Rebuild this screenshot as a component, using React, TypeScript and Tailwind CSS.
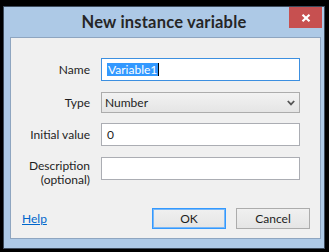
export default function App() {
  const font = { fontFamily: 'Lato, "Liberation Sans", sans-serif' }
  return (
    <div className="w-[329px] h-[252px] bg-black pt-[6px] pl-[3px] overflow-hidden" style={font}>
      <div className="relative w-[322px] h-[243px] border border-[#3d4b5c] bg-[#adc9e6] flex flex-col">
        {/* title bar */}
        <div className="h-[30px] flex items-center justify-center">
          <span className="text-[16.5px] font-bold text-[#262626] tracking-[0.2px] pt-[1px]">New instance variable</span>
        </div>
        <button className="absolute top-0 right-[2px] w-[33px] h-[21px] bg-[#c75050] flex items-center justify-center">
          <svg width="10" height="8" viewBox="0 0 10 8">
            <path d="M1.5 0.8 L8.5 7.2 M8.5 0.8 L1.5 7.2" stroke="white" strokeWidth="2.2" />
          </svg>
        </button>

        {/* client area */}
        <div className="ml-[6px] mr-[3px] h-[202px] border border-[#8ea5c0] bg-[#f0f0f0] flex flex-col text-[12px] text-[#1e1e1e]">
          <div className="mt-[20px] flex items-center h-[23px]">
            <label className="w-[79px] text-right">Name</label>
            <div className="ml-[11px] w-[199px] h-[23px] border border-[#3c8fe0] bg-white flex items-center pl-[5px]">
              <span className="bg-[#3399ff] text-white leading-[13px] px-[1px]">Variable1</span>
              <span className="w-[1px] h-[13px] bg-black" />
            </div>
          </div>

          <div className="mt-[11px] flex items-center h-[21px]">
            <label className="w-[79px] text-right">Type</label>
            <div className="ml-[11px] w-[199px] h-[21px] border border-[#acacac] bg-gradient-to-b from-[#f2f2f2] to-[#e5e5e5] flex items-center pl-[3px] pr-[4px] justify-between">
              <span>Number</span>
              <svg width="8" height="6" viewBox="0 0 8 6">
                <path d="M0.8 1 L4 4.4 L7.2 1" stroke="#555" strokeWidth="1.8" fill="none" />
              </svg>
            </div>
          </div>

          <div className="mt-[10px] flex items-center h-[23px]">
            <label className="w-[79px] text-right">Initial value</label>
            <div className="ml-[11px] w-[199px] h-[23px] border border-[#abadb3] bg-white flex items-center pl-[5px]">
              <span>0</span>
            </div>
          </div>

          <div className="mt-[11px] flex items-start">
            <label className="w-[79px] text-right leading-[14px] pt-[2px]">
              Description
              <br />
              (optional)
            </label>
            <div className="ml-[11px] w-[199px] h-[23px] border border-[#abadb3] bg-white" />
          </div>

          <div className="mt-auto mb-[9px] flex items-center pl-[11px] pr-[10px]">
            <a className="text-[#0066cc] underline">Help</a>
            <div className="ml-auto flex gap-[10px]">
              <button className="w-[74px] h-[21px] border border-[#3399ff] shadow-[inset_0_0_0_1px_#7ab8f7] bg-gradient-to-b from-[#f0f0f0] to-[#e5e5e5] flex items-center justify-center">
                OK
              </button>
              <button className="w-[74px] h-[21px] border border-[#acacac] bg-gradient-to-b from-[#f0f0f0] to-[#e5e5e5] flex items-center justify-center">
                Cancel
              </button>
            </div>
          </div>
        </div>
      </div>
    </div>
  )
}
